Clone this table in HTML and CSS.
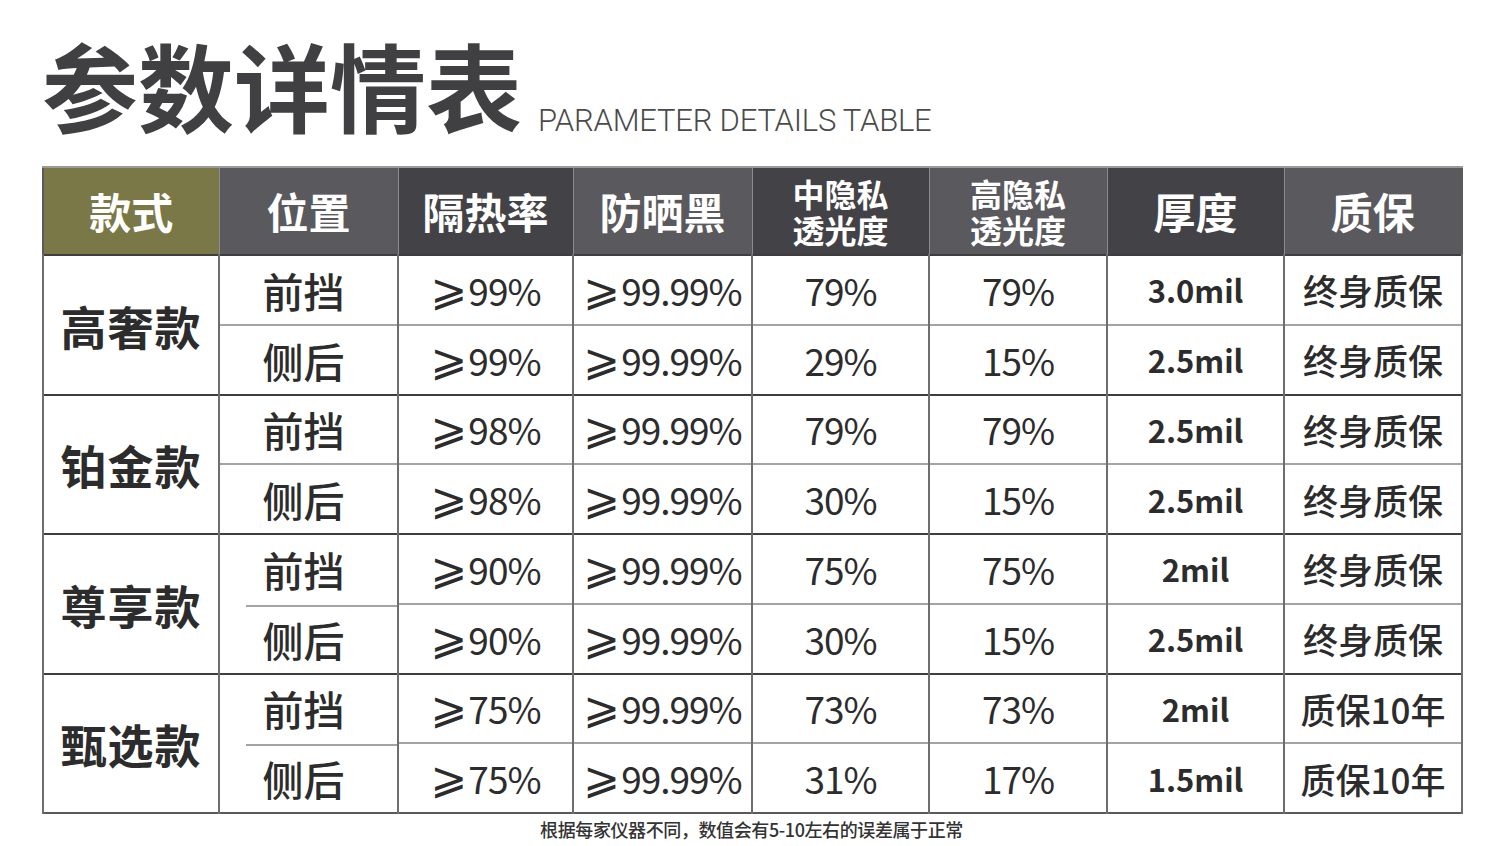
FILE: index.html
```html
<!DOCTYPE html>
<html lang="zh-CN">
<head>
<meta charset="utf-8">
<title>参数详情表</title>
<link rel="stylesheet" href="styles.css">
</head>
<body>
<div class="page">
  <header class="title-bar">
    <h1 class="title-cn">参数详情表</h1>
    <span class="title-en">PARAMETER DETAILS TABLE</span>
  </header>
  <table class="spec">
    <colgroup>
      <col class="c1"><col class="c2"><col class="c3"><col class="c4">
      <col class="c5"><col class="c6"><col class="c7"><col class="c8">
    </colgroup>
    <thead>
      <tr>
        <th class="h-olive">款式</th>
        <th class="h-mid">位置</th>
        <th class="h-dark">隔热率</th>
        <th class="h-mid">防晒黑</th>
        <th class="h-dark small"><span class="ln">中隐私</span><span class="ln">透光度</span></th>
        <th class="h-mid small"><span class="ln">高隐私</span><span class="ln">透光度</span></th>
        <th class="h-dark">厚度</th>
        <th class="h-mid">质保</th>
      </tr>
    </thead>
    <tbody>
      <tr class="first">
        <td class="model" rowspan="2">高奢款</td>
        <td class="pos">前挡</td><td class="num"><span class="ge">⩾</span>99%</td><td class="num"><span class="ge">⩾</span>99.99%</td>
        <td class="num">79%</td><td class="num">79%</td><td class="mil">3.0mil</td><td class="war">终身质保</td>
      </tr>
      <tr class="second">
        <td class="pos">侧后</td><td class="num"><span class="ge">⩾</span>99%</td><td class="num"><span class="ge">⩾</span>99.99%</td>
        <td class="num">29%</td><td class="num">15%</td><td class="mil">2.5mil</td><td class="war">终身质保</td>
      </tr>
      <tr class="first">
        <td class="model" rowspan="2">铂金款</td>
        <td class="pos">前挡</td><td class="num"><span class="ge">⩾</span>98%</td><td class="num"><span class="ge">⩾</span>99.99%</td>
        <td class="num">79%</td><td class="num">79%</td><td class="mil">2.5mil</td><td class="war">终身质保</td>
      </tr>
      <tr class="second">
        <td class="pos">侧后</td><td class="num"><span class="ge">⩾</span>98%</td><td class="num"><span class="ge">⩾</span>99.99%</td>
        <td class="num">30%</td><td class="num">15%</td><td class="mil">2.5mil</td><td class="war">终身质保</td>
      </tr>
      <tr class="first">
        <td class="model" rowspan="2">尊享款</td>
        <td class="pos">前挡</td><td class="num"><span class="ge">⩾</span>90%</td><td class="num"><span class="ge">⩾</span>99.99%</td>
        <td class="num">75%</td><td class="num">75%</td><td class="mil">2mil</td><td class="war">终身质保</td>
      </tr>
      <tr class="second gap">
        <td class="pos">侧后</td><td class="num"><span class="ge">⩾</span>90%</td><td class="num"><span class="ge">⩾</span>99.99%</td>
        <td class="num">30%</td><td class="num">15%</td><td class="mil">2.5mil</td><td class="war">终身质保</td>
      </tr>
      <tr class="first">
        <td class="model" rowspan="2">甄选款</td>
        <td class="pos">前挡</td><td class="num"><span class="ge">⩾</span>75%</td><td class="num"><span class="ge">⩾</span>99.99%</td>
        <td class="num">73%</td><td class="num">73%</td><td class="mil">2mil</td><td class="war">质保10年</td>
      </tr>
      <tr class="second gap">
        <td class="pos">侧后</td><td class="num"><span class="ge">⩾</span>75%</td><td class="num"><span class="ge">⩾</span>99.99%</td>
        <td class="num">31%</td><td class="num">17%</td><td class="mil">1.5mil</td><td class="war">质保10年</td>
      </tr>
    </tbody>
  </table>
  <p class="note">根据每家仪器不同，数值会有5-10左右的误差属于正常</p>
</div>
</body>
</html>
```
FILE: styles.css
```css
html, body {
  margin: 0;
  padding: 0;
  background: #ffffff;
}
body {
  font-family: "Noto Sans CJK SC", "Noto Sans", sans-serif;
  color: #2e2e2e;
}
.page {
  width: 1419px;
  padding: 22px 0 0 42px;
}
.title-bar {
  display: flex;
  align-items: flex-end;
  gap: 16px;
  height: 120px;
  margin-bottom: 24px;
}
.title-cn {
  margin: 0;
  font-size: 96px;
  line-height: 116px;
  font-weight: 700;
  color: #403f41;
}
.title-en {
  font-family: "Roboto", "Liberation Sans", sans-serif;
  font-size: 31px;
  font-weight: 300;
  line-height: 31px;
  margin-bottom: 6px;
  color: #4a4a4a;
  letter-spacing: -0.2px;
}
.spec {
  width: 1419px;
  table-layout: fixed;
  border-collapse: collapse;
  border: 2px solid #5a5a5a;
}
.c1 { width: 176px; }
.c2 { width: 179px; }
.c3 { width: 175px; }
.c4 { width: 179px; }
.c5 { width: 177px; }
.c6 { width: 178px; }
.c7 { width: 177px; }
.c8 { width: 178px; }

.spec th {
  height: 86px;
  padding: 0;
  color: #ffffff;
  font-size: 42px;
  font-weight: 700;
  line-height: 1;
  border-right: 1px solid #8c8b8f;
  border-top: 2px solid #9a9a9a;
}
.spec th.small {
  font-size: 32px;
  line-height: 36px;
}
.ln {
  display: block;
}
.h-olive { background: #7a7846; }
.h-mid { background: #5a595e; }
.h-dark { background: #434246; }

.spec td {
  height: 67.75px;
  padding: 0;
  text-align: center;
  border-left: 2px solid #6e6e6e;
  border-right: 2px solid #6e6e6e;
  color: #2c2c2c;
}
.spec tr.first td {
  border-top: 2px solid #3e3e3e;
}
.spec tr.second td {
  border-top: 2px solid #a4a4a4;
}
.spec tr.gap td.pos {
  border-top: 2px solid #ffffff;
  background-image: linear-gradient(#a4a4a4, #a4a4a4);
  background-repeat: no-repeat;
  background-position: 26px 0;
  background-size: calc(100% - 26px) 2px;
}
.model {
  font-size: 46px;
  font-weight: 700;
  color: #262626;
  letter-spacing: 1px;
}
.pos {
  font-size: 41px;
  font-weight: 500;
  color: #333333;
  padding-right: 10px !important;
}
.num {
  font-size: 37px;
  font-weight: 400;
  color: #2e2e2e;
  letter-spacing: -1px;
}
.ge {
  font-family: "DejaVu Sans", sans-serif;
  font-size: 44px;
  line-height: 1;
  vertical-align: 1px;
  margin-right: 2px;
}
.mil {
  font-size: 31px;
  font-weight: 700;
  color: #1e1e1e;
}
.war {
  font-size: 35px;
  font-weight: 500;
  color: #333333;
}
.note {
  margin: 2px 0 0;
  text-align: center;
  font-size: 18px;
  font-weight: 500;
  color: #333333;
  letter-spacing: -0.4px;
}
```
